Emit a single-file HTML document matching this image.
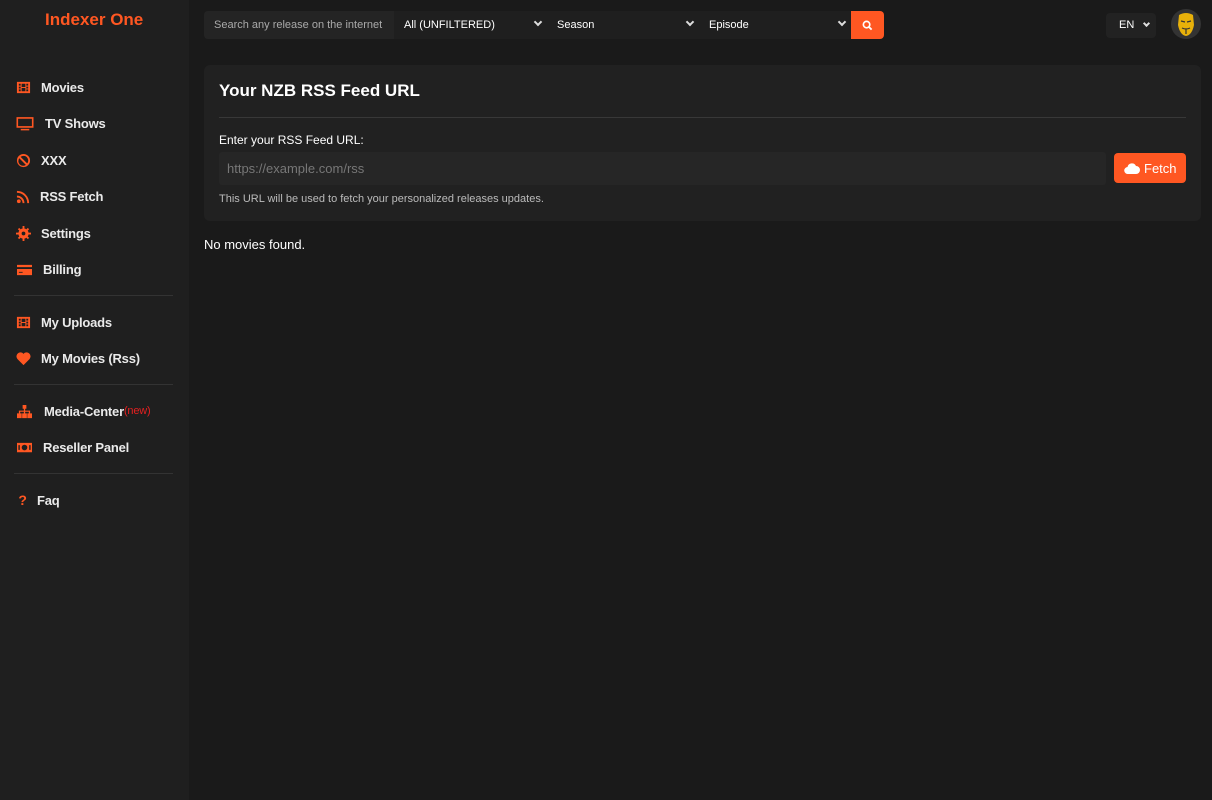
<!DOCTYPE html>
<html><head><style>
*{box-sizing:border-box;margin:0;padding:0}
body{width:1212px;height:800px;background:#1a1a1a;font-family:"Liberation Sans",Arial,sans-serif;color:#fff;position:relative;overflow:hidden}
.side{position:absolute;left:0;top:0;width:189px;height:800px;background:#1f1f1f}
.logo{position:absolute;left:45px;top:10px;color:#ff5722;font-weight:bold;font-size:17px}
.item{position:absolute;left:16px;height:20px;display:flex;align-items:center;font-size:13px;font-weight:bold;color:#eaeaea;letter-spacing:-0.2px}
.item svg{width:15px;height:15px;margin-right:10px;fill:#ff5722}
.hr{position:absolute;left:14px;width:159px;height:1px;background:#333}
.bar{position:absolute;top:11px;left:204px;height:28px;display:flex;background:#1f1f1f;border-radius:4px;font-size:11px}
.bar div{display:flex;align-items:center;padding-left:10px;position:relative}
.chev{position:absolute;right:6px;top:8px;width:6px;height:6px;border-right:2px solid #ddd;border-bottom:2px solid #ddd;transform:rotate(45deg)}
.card{position:absolute;left:204px;top:65px;width:997px;height:156px;background:#212121;border-radius:6px}
</style></head><body>
<div class="side">
<div class="logo">Indexer One</div>
<div class="item" style="top:77px"><svg viewBox="0 0 16 16"><path d="M1 2h14v12H1zM3 4v2h2V4zM3 7v2h2V7zM3 10v2h2v-2zM11 4v2h2V4zM11 7v2h2V7zM11 10v2h2v-2zM6 4v3.5h4V4zM6 8.5V12h4V8.5z" fill-rule="evenodd"/></svg>Movies</div>
<div class="item" style="top:113px"><svg viewBox="0 0 16 16" style="width:18px;height:17px;margin-right:11px"><path d="M0 2h16v10H0zM1.5 3.5v7h13v-7zM4 13h8v1.5H4z" fill-rule="evenodd"/></svg>TV Shows</div>
<div class="item" style="top:150px"><svg viewBox="0 0 16 16"><path d="M8 1a7 7 0 100 14A7 7 0 008 1zm0 2a5 5 0 013.9 8.1L4.9 4.1A5 5 0 018 3zM3.5 5.6l7 7A5 5 0 013.5 5.6z" fill-rule="evenodd"/></svg>XXX</div>
<div class="item" style="top:186px"><svg viewBox="0 0 16 16" style="margin-right:9px"><circle cx="3" cy="13" r="2"/><path d="M1 7a8 8 0 018 8H7a6 6 0 00-6-6zM1 2a13 13 0 0113 13h-2A11 11 0 001 4z"/></svg>RSS Fetch</div>
<div class="item" style="top:223px"><svg viewBox="0 0 16 16"><circle cx="8" cy="8" r="5.5"/><path d="M7 0h2v3H7zM7 13h2v3H7zM0 7h3v2H0zM13 7h3v2h-3zM2 3.4l1.4-1.4 2 2-1.4 1.4zM10.6 12l1.4-1.4 2 2-1.4 1.4zM2 12.6l2-2 1.4 1.4-2 2zM10.6 4l2-2 1.4 1.4-2 2z"/><circle cx="8" cy="8" r="2" fill="#1f1f1f"/></svg>Settings</div>
<div class="item" style="top:259px"><svg viewBox="0 0 16 16" style="width:17px;margin-right:10px"><path d="M0 3h16v11H0zM0 5.5v2h16v-2zM2 10.5v1h4v-1z" fill-rule="evenodd"/></svg>Billing</div>
<div class="hr" style="top:295px"></div>
<div class="item" style="top:312px"><svg viewBox="0 0 16 16"><path d="M1 2h14v12H1zM3 4v2h2V4zM3 7v2h2V7zM3 10v2h2v-2zM11 4v2h2V4zM11 7v2h2V7zM11 10v2h2v-2zM6 4v3.5h4V4zM6 8.5V12h4V8.5z" fill-rule="evenodd"/></svg>My Uploads</div>
<div class="item" style="top:348px"><svg viewBox="0 0 16 16"><path d="M8 15L1.5 8.5A4 4 0 018 3a4 4 0 016.5 5.5z"/></svg>My Movies (Rss)</div>
<div class="hr" style="top:384px"></div>
<div class="item" style="top:401px"><svg viewBox="0 0 16 16" style="width:17px;margin-right:11px"><path d="M6 1h4v4H6zM7.3 5h1.4v2H14v3h-1.4V8.3H8.7V10H7.3V8.3H3.4V10H2V7h5.3zM0 10h5v5H0zM5.5 10h5v5h-5zM11 10h5v5h-5z"/></svg>Media-Center<span style="color:#e52020;font-weight:normal;font-size:11px">(new)</span></div>
<div class="item" style="top:437px"><svg viewBox="0 0 16 16" style="width:17px;margin-right:10px"><path d="M0 3h16v10H0zM8 5a3 3 0 100 6 3 3 0 000-6zM1.5 5.5v5h1.5v-5zM13 5.5v5h1.5v-5z" fill-rule="evenodd"/></svg>Reseller Panel</div>
<div class="hr" style="top:473px"></div>
<div class="item" style="top:490px"><span style="color:#ff5722;width:13px;margin-right:8px;text-align:center;font-size:14px">?</span>Faq</div>
</div>

<div class="bar">
<div style="width:190px;background:#242424;color:#aaa;border-radius:4px 0 0 4px">Search any release on the internet</div>
<div style="width:153px">All (UNFILTERED)<span class="chev"></span></div>
<div style="width:152px">Season<span class="chev"></span></div>
<div style="width:152px">Episode<span class="chev"></span></div>
<div style="width:33px;background:#ff5722;border-radius:0 4px 4px 0;padding-left:11px"><svg width="11" height="11" viewBox="0 0 12 12"><circle cx="5" cy="5" r="3.5" fill="none" stroke="#fff" stroke-width="1.8"/><path d="M7.5 7.5l3 3" stroke="#fff" stroke-width="2"/></svg></div>
</div>
<div style="position:absolute;left:1106px;top:13px;width:50px;height:25px;background:#222;border-radius:4px;font-size:11px;padding:6px 0 0 13px">EN<span class="chev" style="right:7px;top:8px;width:5px;height:5px"></span></div>
<div style="position:absolute;left:1171px;top:9px;width:30px;height:30px;border-radius:50%;background:#333;overflow:hidden"><svg width="30" height="30" viewBox="0 0 30 30"><path d="M8 6q7-4 14 0l1 10q-2 10-8 11-6-1-8-11z" fill="#e8b10a"/><path d="M10 12l4 1M20 12l-4 1M11 19q4 2 8 0M15 20v5" stroke="#333" stroke-width="1.2" fill="none"/></svg></div>

<div class="card">
<div style="position:absolute;left:15px;top:16px;font-size:17px;font-weight:bold">Your NZB RSS Feed URL</div>
<div style="position:absolute;left:15px;right:15px;top:52px;height:1px;background:#383838"></div>
<div style="position:absolute;left:15px;top:68px;font-size:12px">Enter your RSS Feed URL:</div>
<div style="position:absolute;left:15px;top:87px;width:887px;height:33px;background:#262626;border-radius:3px;color:#777;font-size:13px;padding:9px 0 0 8px">https://example.com/rss</div>
<div style="position:absolute;left:910px;top:88px;width:72px;height:30px;background:#ff5722;border-radius:4px;font-size:13px;display:flex;align-items:center;padding-left:10px"><svg width="16" height="12" viewBox="0 0 16 12" style="margin-right:4px"><path d="M4 12a3.5 3.5 0 01-.5-7A4.5 4.5 0 0112 4a4 4 0 010 8z" fill="#fff"/></svg>Fetch</div>
<div style="position:absolute;left:15px;top:128px;font-size:11px;color:#bbb">This URL will be used to fetch your personalized releases updates.</div>
</div>
<div style="position:absolute;left:204px;top:237px;font-size:13px">No movies found.</div>
</body></html>
